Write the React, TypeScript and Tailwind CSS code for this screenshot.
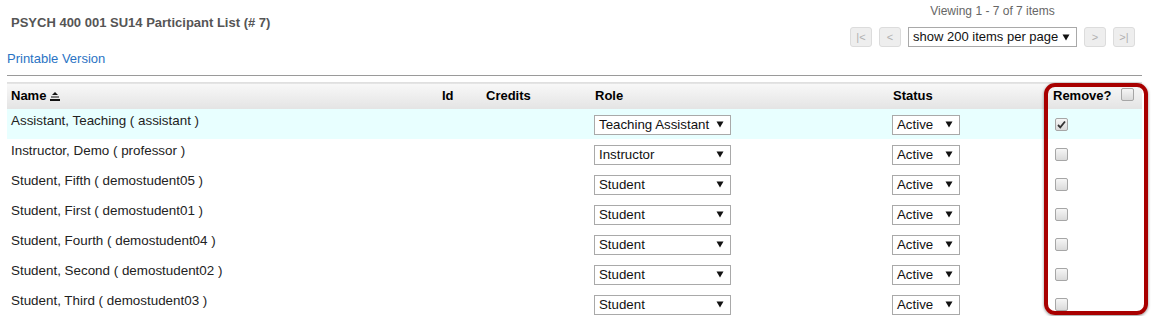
import React from "react";

const rows = [
  { name: "Assistant, Teaching ( assistant )", role: "Teaching Assistant", checked: true },
  { name: "Instructor, Demo ( professor )", role: "Instructor", checked: false },
  { name: "Student, Fifth ( demostudent05 )", role: "Student", checked: false },
  { name: "Student, First ( demostudent01 )", role: "Student", checked: false },
  { name: "Student, Fourth ( demostudent04 )", role: "Student", checked: false },
  { name: "Student, Second ( demostudent02 )", role: "Student", checked: false },
  { name: "Student, Third ( demostudent03 )", role: "Student", checked: false },
];

const Arrow = () => (
  <svg width="8" height="7" viewBox="0 0 8 7" className="shrink-0">
    <polygon points="0.5,0.5 7.5,0.5 4,6.5" fill="#111" />
  </svg>
);

const FakeSelect = ({ label, className }: { label: string; className: string }) => (
  <div
    className={`flex items-center justify-between h-[20px] border border-[#a9a9a9] bg-white pl-[4px] pr-[6px] leading-[18px] text-[#111] ${className}`}
  >
    <span className="whitespace-nowrap">{label}</span>
    <Arrow />
  </div>
);

const Checkbox = ({ checked }: { checked?: boolean }) => (
  <div className="w-[13px] h-[13px] rounded-[2px] border border-[#a6a6a6] bg-gradient-to-b from-[#f6f6f6] to-[#dadada] flex items-center justify-center">
    {checked && (
      <svg width="9" height="9" viewBox="0 0 9 9">
        <path d="M1 5 L3.3 7.3 L8 1.5" stroke="#333" strokeWidth="1.8" fill="none" />
      </svg>
    )}
  </div>
);

const PagerButton = ({ label }: { label: string }) => (
  <div className="w-[22px] h-[20px] rounded-[3px] border border-[#dcdcdc] bg-[#eeeeee] flex items-center justify-center text-[11px] text-[#b0b0b0]">
    {label}
  </div>
);

const SortIcon = () => (
  <svg width="10" height="9" viewBox="0 0 10 9" className="inline-block ml-[4px] mb-[1px]">
    <polygon points="5,0 8,3 2,3" fill="#111" />
    <rect x="1" y="4.5" width="8" height="1" fill="#111" />
    <rect x="0" y="7" width="10" height="2" fill="#111" />
  </svg>
);

export default function App() {
  return (
    <div className="w-[1153px] h-[316px] overflow-hidden bg-white px-[7px] font-['Liberation_Sans',Arial,sans-serif]">
      <div className="flex justify-between w-[1135px]">
        <div className="pt-[15px] flex flex-col">
          <h1 className="pl-[4px] text-[13px] leading-[16px] font-bold text-[#555]">
            PSYCH 400 001 SU14 Participant List (# 7)
          </h1>
          <a className="mt-[20px] text-[13px] leading-[16px] text-[#2a73c4]">Printable Version</a>
        </div>
        <div className="mr-[7px] pt-[4px] flex flex-col items-center">
          <div className="text-[12px] leading-[14px] text-[#666]">Viewing 1 - 7 of 7 items</div>
          <div className="mt-[9px] flex items-center gap-[7px]">
            <PagerButton label="|<" />
            <PagerButton label="<" />
            <FakeSelect label="show 200 items per page" className="w-[169px] text-[13px]" />
            <PagerButton label=">" />
            <PagerButton label=">|" />
          </div>
        </div>
      </div>

      <div className="mt-[8px] h-px w-[1135px] bg-[#9a9a9a]" />

      <div className="relative mt-[6px] w-[1135px]">
        <table className="w-full table-fixed border-collapse text-[13px]">
          <colgroup>
            <col className="w-[431px]" />
            <col className="w-[44px]" />
            <col className="w-[109px]" />
            <col className="w-[298px]" />
            <col className="w-[160px]" />
            <col />
          </colgroup>
          <thead>
            <tr className="h-[26px] bg-gradient-to-b from-[#f8f8f8] to-[#e4e4e4] border-t border-[#e0e0e0] text-left text-[#000]">
              <th className="pl-[4px] font-bold align-middle">
                Name
                <SortIcon />
              </th>
              <th className="pl-[4px] font-bold">Id</th>
              <th className="pl-[4px] font-bold">Credits</th>
              <th className="pl-[4px] font-bold">Role</th>
              <th className="pl-[4px] font-bold">Status</th>
              <th className="pl-[4px] font-bold">
                <div className="flex items-center">
                  <span>Remove?</span>
                  <span className="ml-[9px] -mt-[3px]">
                    <Checkbox />
                  </span>
                </div>
              </th>
            </tr>
          </thead>
          <tbody>
            {rows.map((row, index) => (
              <tr key={index} className={`h-[30px] ${index === 0 ? "bg-[#e8ffff]" : "bg-white"}`}>
                <td className="pl-[4px] pt-[4px] align-top text-[13.4px] leading-[15px] text-[#222] whitespace-nowrap">
                  {row.name}
                </td>
                <td />
                <td />
                <td className="align-top pl-[3px] pt-[6px]">
                  <FakeSelect label={row.role} className="w-[137px] text-[13.3px]" />
                </td>
                <td className="align-top pl-[3px] pt-[6px]">
                  <FakeSelect label="Active" className="w-[68px] text-[13.3px]" />
                </td>
                <td className="align-top pl-[6px] pt-[9px]">
                  <Checkbox checked={row.checked} />
                </td>
              </tr>
            ))}
          </tbody>
        </table>
        <div className="pointer-events-none absolute left-[1037px] top-[1px] w-[104px] h-[232px] rounded-[11px] border-[4px] border-[#a80000] shadow-[0_1px_3px_rgba(0,0,0,0.45)]" />
      </div>
    </div>
  );
}
